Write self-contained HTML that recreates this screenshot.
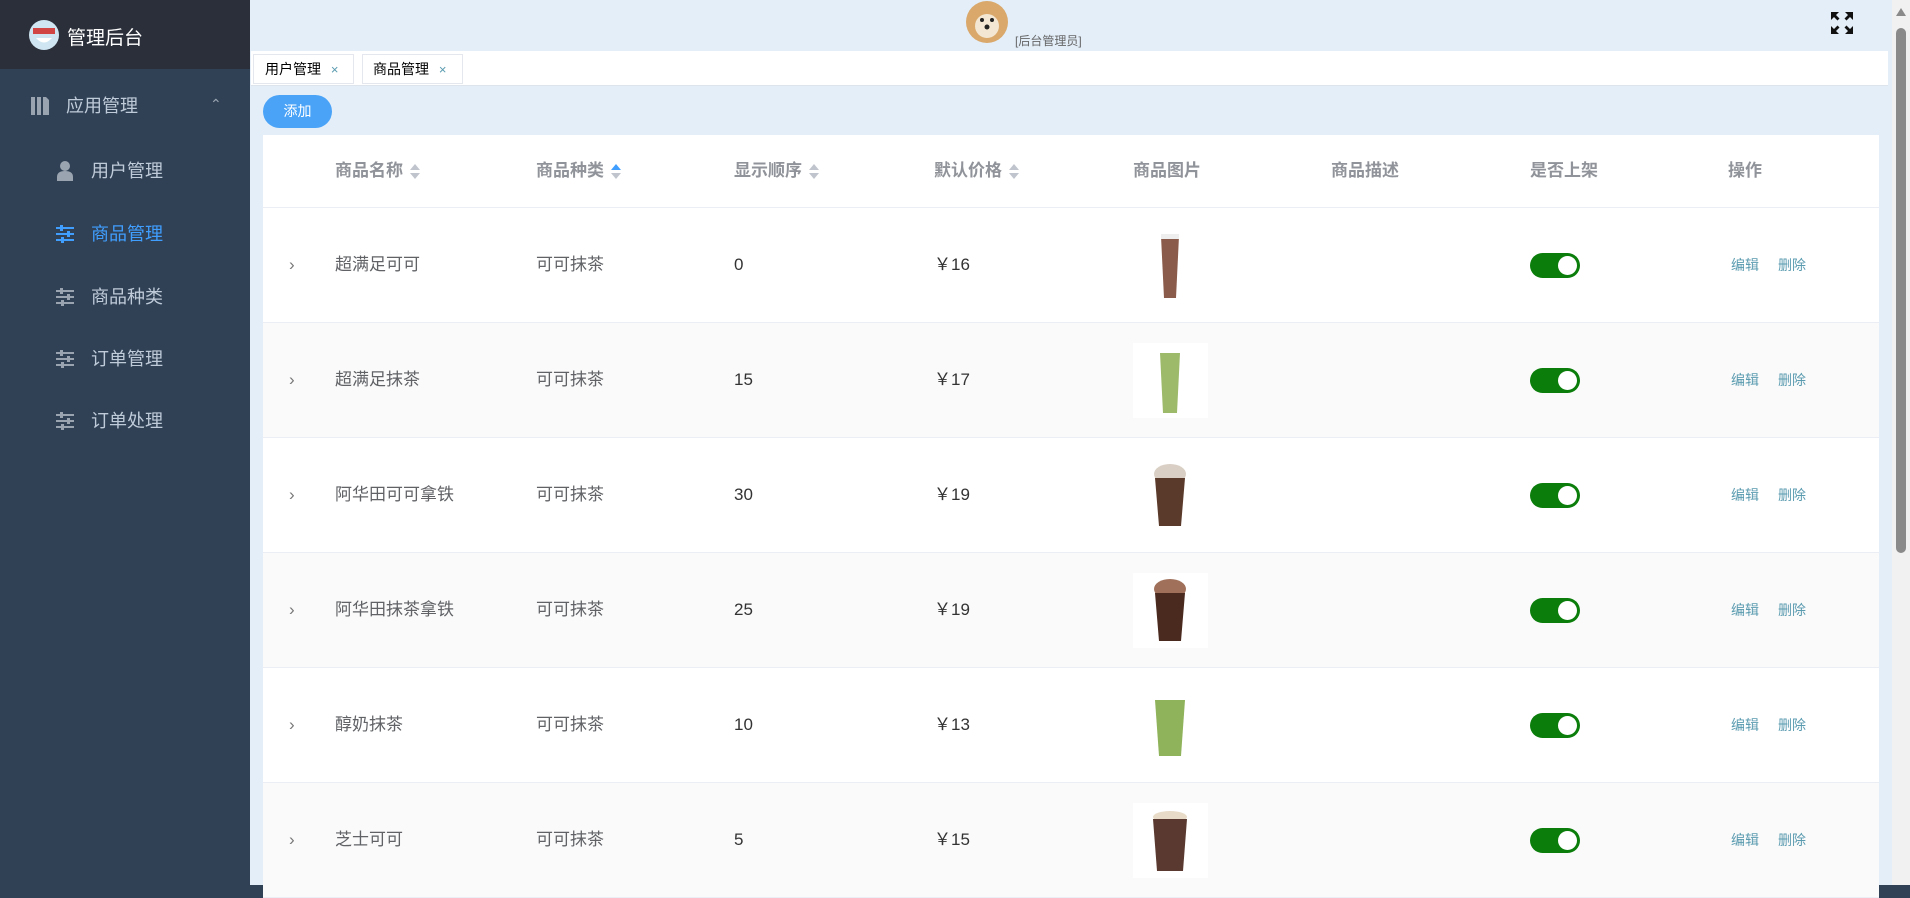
<!DOCTYPE html>
<html><head><meta charset="utf-8"><style>
*{margin:0;padding:0;box-sizing:border-box}
html{background:#304156}
body{width:1910px;height:885px;overflow:hidden;position:relative;background:#e3eef9;font-family:"Liberation Sans","Noto Sans CJK SC",sans-serif}
.abs{position:absolute}
#side{left:0;top:0;width:250px;height:885px;background:#304156}
#sidehead{left:0;top:0;width:250px;height:69px;background:#2b2f3a}
.mi{position:absolute;left:0;width:250px;color:#bfcbd9;font-size:18px;line-height:24px}
.th{position:absolute;top:159px;font-size:17px;font-weight:bold;color:#909399;line-height:24px}
.sort{display:inline-block;position:relative;width:12px;height:18px;vertical-align:middle;margin-left:6px}
.sort:before{content:"";position:absolute;left:1px;top:1px;border-left:5px solid transparent;border-right:5px solid transparent;border-bottom:6px solid #c0c4cc}
.sort:after{content:"";position:absolute;left:1px;top:10px;border-left:5px solid transparent;border-right:5px solid transparent;border-top:6px solid #c0c4cc}
.sort.up:before{border-bottom-color:#409eff}
.row{position:absolute;left:263px;width:1616px;height:115px;border-bottom:1px solid #ebeef5}
.c{position:absolute;top:45px;font-size:17px;color:#606266;line-height:24px}
.sw{position:absolute;left:1267px;top:45px;width:50px;height:25px;border-radius:13px;background:#0a7d0a}
.sw:after{content:"";position:absolute;right:3px;top:3px;width:19px;height:19px;border-radius:50%;background:#fff}
.op{position:absolute;top:47px;font-size:14px;color:#5a9bb0}
.img{position:absolute;left:870px;top:20px;width:75px;height:75px;background:#fff}
</style></head><body>
<div id="side" class="abs"></div>
<div id="sidehead" class="abs"></div>
<svg class="abs" style="left:28px;top:19px" width="32" height="32"><circle cx="16" cy="16" r="15" fill="#cfe6f2"/><rect x="5" y="9" width="22" height="6" fill="#d24545"/><path d="M8 19 Q16 28 24 19" fill="#fff"/></svg>
<div class="abs" style="left:67px;top:23px;color:#fff;font-size:19px">管理后台</div>
<svg class="abs" style="left:31px;top:97px" width="18" height="18"><rect x="0" y="0" width="4" height="18" fill="#9aa4b0"/><rect x="6" y="0" width="4" height="18" fill="#9aa4b0"/><path d="M12 0h3l3 3v15h-6z" fill="#9aa4b0"/></svg>
<div class="mi" style="top:94px;padding-left:66px">应用管理</div>
<div class="abs" style="left:210px;top:96px;color:#9aa4b0;font-size:14px">&#8963;</div>
<svg class="abs" style="left:57px;top:161px" width="16" height="20"><circle cx="8" cy="5" r="5" fill="#9aa4b0"/><path d="M0 20v-4q0-6 8-6t8 6v4z" fill="#9aa4b0"/></svg>
<div class="mi" style="top:159px;padding-left:91px">用户管理</div>
<div class="mi" style="top:222px;padding-left:91px;color:#409eff">商品管理</div>
<div class="mi" style="top:285px;padding-left:91px">商品种类</div>
<div class="mi" style="top:347px;padding-left:91px">订单管理</div>
<div class="mi" style="top:409px;padding-left:91px">订单处理</div>
<svg class="abs" style="left:56px;top:225px" width="18" height="210">
<g fill="#409eff"><rect x="0" y="2" width="18" height="2"/><rect x="0" y="8" width="18" height="2"/><rect x="0" y="14" width="18" height="2"/><rect x="4" y="0" width="3" height="6"/><rect x="11" y="6" width="3" height="6"/><rect x="5" y="12" width="3" height="6"/></g>
<g fill="#9aa4b0" transform="translate(0,63)"><rect x="0" y="2" width="18" height="2"/><rect x="0" y="8" width="18" height="2"/><rect x="0" y="14" width="18" height="2"/><rect x="4" y="0" width="3" height="6"/><rect x="11" y="6" width="3" height="6"/><rect x="5" y="12" width="3" height="6"/></g>
<g fill="#9aa4b0" transform="translate(0,125)"><rect x="0" y="2" width="18" height="2"/><rect x="0" y="8" width="18" height="2"/><rect x="0" y="14" width="18" height="2"/><rect x="4" y="0" width="3" height="6"/><rect x="11" y="6" width="3" height="6"/><rect x="5" y="12" width="3" height="6"/></g>
<g fill="#9aa4b0" transform="translate(0,187)"><rect x="0" y="2" width="18" height="2"/><rect x="0" y="8" width="18" height="2"/><rect x="0" y="14" width="18" height="2"/><rect x="4" y="0" width="3" height="6"/><rect x="11" y="6" width="3" height="6"/><rect x="5" y="12" width="3" height="6"/></g>
</svg>
<!-- header -->
<svg class="abs" style="left:965px;top:0px" width="44" height="44"><circle cx="22" cy="22" r="21" fill="#d9a86a"/><circle cx="22" cy="26" r="12" fill="#f3e6d2"/><circle cx="17" cy="20" r="2" fill="#222"/><circle cx="27" cy="20" r="2" fill="#222"/><circle cx="22" cy="27" r="2.5" fill="#222"/></svg>
<div class="abs" style="left:1015px;top:32px;font-size:12px;color:#666">[后台管理员]</div>
<svg class="abs" style="left:1830px;top:11px" width="24" height="24" fill="#111"><path d="M1 1h8l-3 3 3.5 3.5-2 2L4 6 1 9z"/><path d="M23 1h-8l3 3-3.5 3.5 2 2L20 6l3 3z"/><path d="M1 23h8l-3-3 3.5-3.5-2-2L4 18l-3-3z"/><path d="M23 23h-8l3-3-3.5-3.5 2-2L20 18l3-3z"/></svg>
<!-- tabs -->
<div class="abs" style="left:251px;top:51px;width:1637px;height:35px;background:#fff;border-bottom:1px solid #dde4ec"></div>
<div class="abs" style="left:253px;top:54px;width:101px;height:30px;border:1px solid #e4e7ed;font-size:14px;line-height:28px;padding-left:11px">用户管理 <span style="color:#5a9bb0;margin-left:6px;font-size:13px">×</span></div>
<div class="abs" style="left:362px;top:54px;width:101px;height:30px;border:1px solid #e4e7ed;font-size:14px;line-height:28px;padding-left:10px">商品管理 <span style="color:#5a9bb0;margin-left:6px;font-size:13px">×</span></div>
<div class="abs" style="left:263px;top:95px;width:69px;height:33px;border-radius:17px;background:#4aa3f7;color:#fff;font-size:14px;line-height:33px;text-align:center">添加</div>
<!-- table -->
<div class="abs" style="left:263px;top:135px;width:1616px;height:750px;background:#fff"></div>
<div class="abs" style="left:263px;top:207px;width:1616px;border-top:1px solid #ebeef5"></div>
<div class="th" style="left:335px">商品名称<span class="sort"></span></div>
<div class="th" style="left:536px">商品种类<span class="sort up"></span></div>
<div class="th" style="left:734px">显示顺序<span class="sort"></span></div>
<div class="th" style="left:934px">默认价格<span class="sort"></span></div>
<div class="th" style="left:1133px">商品图片</div>
<div class="th" style="left:1331px">商品描述</div>
<div class="th" style="left:1530px">是否上架</div>
<div class="th" style="left:1728px">操作</div>

<div class="row" style="top:208px;background:#fff"><div class="c" style="left:26px;color:#777">›</div><div class="c" style="left:72px">超满足可可</div><div class="c" style="left:273px">可可抹茶</div><div class="c" style="left:471px;color:#333">0</div><div class="c" style="left:671px;color:#333">￥16</div><div class="img"><svg width="75" height="75"><path d="M28 8h18l-3 62h-12z" fill="#8a5a4a"/><rect x="28" y="6" width="18" height="5" fill="#eee"/></svg></div><div class="sw"></div><div class="op" style="left:1468px">编辑</div><div class="op" style="left:1515px">删除</div></div>
<div class="row" style="top:323px;background:#fafafa"><div class="c" style="left:26px;color:#777">›</div><div class="c" style="left:72px">超满足抹茶</div><div class="c" style="left:273px">可可抹茶</div><div class="c" style="left:471px;color:#333">15</div><div class="c" style="left:671px;color:#333">￥17</div><div class="img"><svg width="75" height="75"><path d="M27 10h20l-3 60h-14z" fill="#9cba6a"/></svg></div><div class="sw"></div><div class="op" style="left:1468px">编辑</div><div class="op" style="left:1515px">删除</div></div>
<div class="row" style="top:438px;background:#fff"><div class="c" style="left:26px;color:#777">›</div><div class="c" style="left:72px">阿华田可可拿铁</div><div class="c" style="left:273px">可可抹茶</div><div class="c" style="left:471px;color:#333">30</div><div class="c" style="left:671px;color:#333">￥19</div><div class="img"><svg width="75" height="75"><ellipse cx="37" cy="16" rx="16" ry="10" fill="#d9cfc4"/><path d="M22 20h30l-4 48h-22z" fill="#5a3a2a"/></svg></div><div class="sw"></div><div class="op" style="left:1468px">编辑</div><div class="op" style="left:1515px">删除</div></div>
<div class="row" style="top:553px;background:#fafafa"><div class="c" style="left:26px;color:#777">›</div><div class="c" style="left:72px">阿华田抹茶拿铁</div><div class="c" style="left:273px">可可抹茶</div><div class="c" style="left:471px;color:#333">25</div><div class="c" style="left:671px;color:#333">￥19</div><div class="img"><svg width="75" height="75"><ellipse cx="37" cy="16" rx="16" ry="10" fill="#a0705a"/><path d="M22 20h30l-4 48h-22z" fill="#4a2a1f"/></svg></div><div class="sw"></div><div class="op" style="left:1468px">编辑</div><div class="op" style="left:1515px">删除</div></div>
<div class="row" style="top:668px;background:#fff"><div class="c" style="left:26px;color:#777">›</div><div class="c" style="left:72px">醇奶抹茶</div><div class="c" style="left:273px">可可抹茶</div><div class="c" style="left:471px;color:#333">10</div><div class="c" style="left:671px;color:#333">￥13</div><div class="img"><svg width="75" height="75"><path d="M22 12h30l-4 56h-22z" fill="#8fb35a"/></svg></div><div class="sw"></div><div class="op" style="left:1468px">编辑</div><div class="op" style="left:1515px">删除</div></div>
<div class="row" style="top:783px;background:#fafafa"><div class="c" style="left:26px;color:#777">›</div><div class="c" style="left:72px">芝士可可</div><div class="c" style="left:273px">可可抹茶</div><div class="c" style="left:471px;color:#333">5</div><div class="c" style="left:671px;color:#333">￥15</div><div class="img"><svg width="75" height="75"><ellipse cx="37" cy="14" rx="17" ry="6" fill="#e8dcc8"/><path d="M20 16h34l-4 52h-26z" fill="#5a3a30"/></svg></div><div class="sw"></div><div class="op" style="left:1468px">编辑</div><div class="op" style="left:1515px">删除</div></div>
<!-- scrollbar -->
<div class="abs" style="left:1892px;top:0;width:18px;height:885px;background:#f1f1f1"></div>
<div class="abs" style="left:1896px;top:28px;width:10px;height:525px;border-radius:5px;background:#8a8a8a"></div>
<div class="abs" style="left:1896px;top:8px;width:0;height:0;border-left:5px solid transparent;border-right:5px solid transparent;border-bottom:8px solid #8a8a8a"></div>
</body></html>
